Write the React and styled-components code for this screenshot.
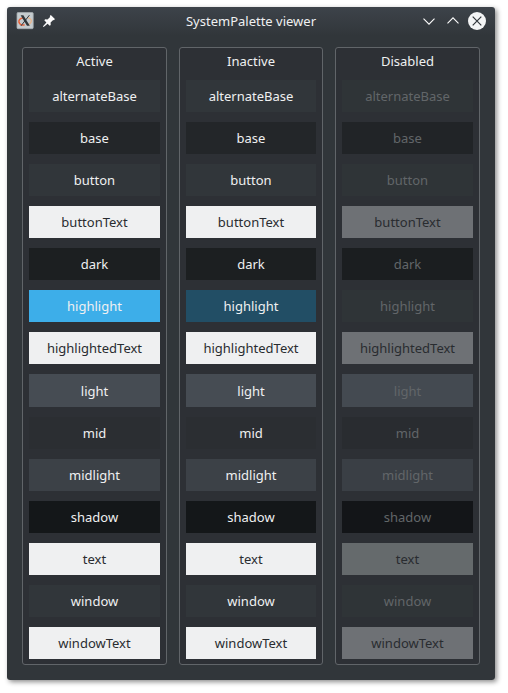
import React from "react";
import styled, { createGlobalStyle } from "styled-components";

const GlobalStyle = createGlobalStyle`
  * { box-sizing: border-box; }
  body {
    margin: 0;
    background: #fff;
    overflow: hidden;
    font-family: "Noto Sans", sans-serif;
    font-size: 13px;
  }
`;

const Desktop = styled.div`
  width: 508px;
  height: 693px;
  padding: 7px 13px 13px 7px;
`;

const Window = styled.main`
  display: flex;
  flex-direction: column;
  height: 673px;
  border-radius: 3px;
  background: linear-gradient(#3d434a 0, #31363a 29px, #31363a 100%);
  box-shadow: 2px 2px 5px rgba(0, 0, 0, 0.45);
`;

const TitleBar = styled.header`
  display: grid;
  grid-template-columns: 90px 1fr 90px;
  align-items: center;
  height: 28px;
  padding: 0 9px;
  color: #eff0f1;
`;

const TitleGroup = styled.div`
  display: flex;
  align-items: center;
  justify-content: ${(p) => (p.$end ? "flex-end" : "flex-start")};
  gap: ${(p) => (p.$end ? "6px" : "7px")};
`;

const Title = styled.h1`
  margin: 0;
  text-align: center;
  font-size: inherit;
  font-weight: 400;
  line-height: 18px;
`;

const Icon = styled.svg`
  display: block;
  flex: none;
`;

const Panels = styled.div`
  display: grid;
  grid-template-columns: 145px 144px 145px;
  gap: 12px;
  padding: 12px 15px 15px;
`;

const Panel = styled.section`
  height: 618px;
  padding: 4px 6px 0;
  border: 1px solid #616569;
  border-radius: 3px;
  background: #2d3035;
`;

const PanelTitle = styled.h2`
  margin: 0 0 10px;
  height: 18px;
  line-height: 18px;
  text-align: center;
  font-size: inherit;
  font-weight: 400;
  color: #eff0f1;
`;

const Swatches = styled.div`
  display: flex;
  flex-direction: column;
  gap: 10px;
`;

const Swatch = styled.div`
  height: ${(p) => (p.$tall ? 33 : 32)}px;
  padding-top: ${(p) => (p.$tall ? 1 : 0)}px;
  line-height: 32px;
  text-align: center;
  background: ${(p) => p.$bg};
  color: ${(p) => p.$fg};
`;

const names = [
  "alternateBase", "base", "button", "buttonText", "dark", "highlight", "highlightedText",
  "light", "mid", "midlight", "shadow", "text", "window", "windowText",
];

const active = {
  alternateBase: "#31363a", base: "#232629", button: "#31363a", buttonText: "#eff0f1",
  dark: "#1c1f21", highlight: "#3daee9", highlightedText: "#eff0f1", light: "#464c53",
  mid: "#2b2e32", midlight: "#3c4147", shadow: "#141719", text: "#eff0f1",
  window: "#31363a", windowText: "#eff0f1",
};

const inactive = { ...active, highlight: "#224e65" };

const disabled = {
  ...active,
  alternateBase: "#2f3437", base: "#212427", button: "#2f3437", buttonText: "#6e7175",
  dark: "#1b1e20", highlight: "#2f3437", highlightedText: "#6e7175", light: "#444a51",
  mid: "#292c30", midlight: "#3a3f45", shadow: "#131518", text: "#656a6c",
  window: "#2f3437", windowText: "#6e7175",
};

const groups = [
  { title: "Active", palette: active, text: "#eff0f1" },
  { title: "Inactive", palette: inactive, text: "#eff0f1" },
  { title: "Disabled", palette: disabled, text: "#626669" },
];

const isTextRole = (name) => name === "text" || name.endsWith("Text");

const AppIcon = () => (
  <Icon width="18" height="18" viewBox="0 0 18 18">
    <rect x="1" y="0.5" width="16.2" height="16.2" rx="1" fill="#c5cbce" stroke="#a3a9ad" strokeWidth="0.8" />
    <path d="M7.5 5.8C3.8 6.3 2.4 8.5 3 10.6c.7 2 3.2 2.9 5.6 2.2" fill="none" stroke="#e8623a" strokeWidth="1.5" />
    <path d="M12 5.8c3 .5 3.9 2.6 3 4.4-.7 1.4-2 2.3-3.6 2.6" fill="none" stroke="#e9b48b" strokeWidth="1.3" />
    <path d="M4.6 3.2h2.8l6.4 10.6H11z" fill="#30363a" />
    <path d="M13.4 3.2 5 13.8" stroke="#30363a" strokeWidth="1" />
  </Icon>
);

const PinIcon = () => (
  <Icon width="16" height="16" viewBox="0 0 16 16">
    <path
      d="M9.8 2 13.9 6.1 13 7.2 12.2 7 9.6 9.6 9.7 11.9 8.7 12.7 6.6 10.7 3 13.8 2.1 13.9 2.2 13 5.4 9.4 3.3 7.3 4.2 6.3 6.5 6.5 9.1 3.9 8.8 3z"
      fill="#fcfcfc"
    />
  </Icon>
);

const MinimizeIcon = () => (
  <Icon width="18" height="18" viewBox="0 0 18 18" fill="none" stroke="#fcfcfc" strokeWidth="1.1">
    <path d="M3.5 6.6 9 12.1l5.5-5.5" />
  </Icon>
);

const MaximizeIcon = () => (
  <Icon width="18" height="18" viewBox="0 0 18 18" fill="none" stroke="#fcfcfc" strokeWidth="1.1">
    <path d="M3.5 11.4 9 5.9l5.5 5.5" />
  </Icon>
);

const CloseIcon = () => (
  <Icon width="18" height="18" viewBox="0 0 18 18">
    <circle cx="9" cy="9" r="9" fill="#f3f4f5" />
    <path d="m4.7 4.7 8.6 8.6m0-8.6-8.6 8.6" stroke="#31363b" strokeWidth="1.2" />
  </Icon>
);

export default function App() {
  return (
    <>
      <GlobalStyle />
      <Desktop>
        <Window>
          <TitleBar>
            <TitleGroup>
              <AppIcon />
              <PinIcon />
            </TitleGroup>
            <Title>SystemPalette viewer</Title>
            <TitleGroup $end>
              <MinimizeIcon />
              <MaximizeIcon />
              <CloseIcon />
            </TitleGroup>
          </TitleBar>
          <Panels>
            {groups.map(({ title, palette, text }) => (
              <Panel key={title}>
                <PanelTitle>{title}</PanelTitle>
                <Swatches>
                  {names.map((name) => (
                    <Swatch
                      key={name}
                      $bg={palette[name]}
                      $fg={isTextRole(name) ? "#292c30" : text}
                      $tall={name === "light"}
                    >
                      {name}
                    </Swatch>
                  ))}
                </Swatches>
              </Panel>
            ))}
          </Panels>
        </Window>
      </Desktop>
    </>
  );
}
